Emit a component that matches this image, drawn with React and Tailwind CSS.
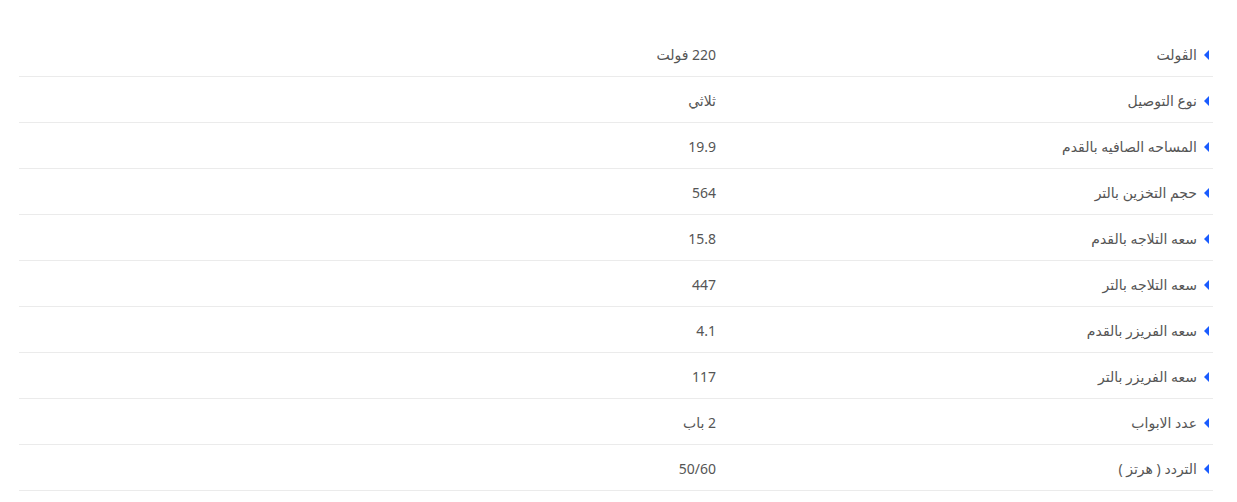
const specs = [
  ["الڤولت", "220 فولت"],
  ["نوع التوصيل", "ثلاثي"],
  ["المساحه الصافيه بالقدم", "19.9"],
  ["حجم التخزين بالتر", "564"],
  ["سعه التلاجه بالقدم", "15.8"],
  ["سعه التلاجه بالتر", "447"],
  ["سعه الفريزر بالقدم", "4.1"],
  ["سعه الفريزر بالتر", "117"],
  ["عدد الابواب", "2 باب"],
  ["التردد ( هرتز )", "50/60"],
];

const App = () => {
  return (
    <div
      dir="rtl"
      className="bg-white pt-[31px] pr-[24px] pl-[19px]"
      style={{ fontFamily: '"Noto Sans", "DejaVu Sans", sans-serif' }}
    >
      {specs.map(([label, value]) => (
        <div
          key={label}
          className="flex items-center h-[46px] border-b border-[#ebebeb] text-[14px] text-[#555] pt-[2px]"
        >
          <div className="w-[497px] flex items-center gap-[7px] pr-[4px]">
            <span className="w-0 h-0 border-y-[5px] border-y-transparent border-l-[5px] border-l-[#1a5cff] rotate-180"></span>
            <span>{label}</span>
          </div>
          <div className="flex-1">{value}</div>
        </div>
      ))}
    </div>
  );
};

export default App;
